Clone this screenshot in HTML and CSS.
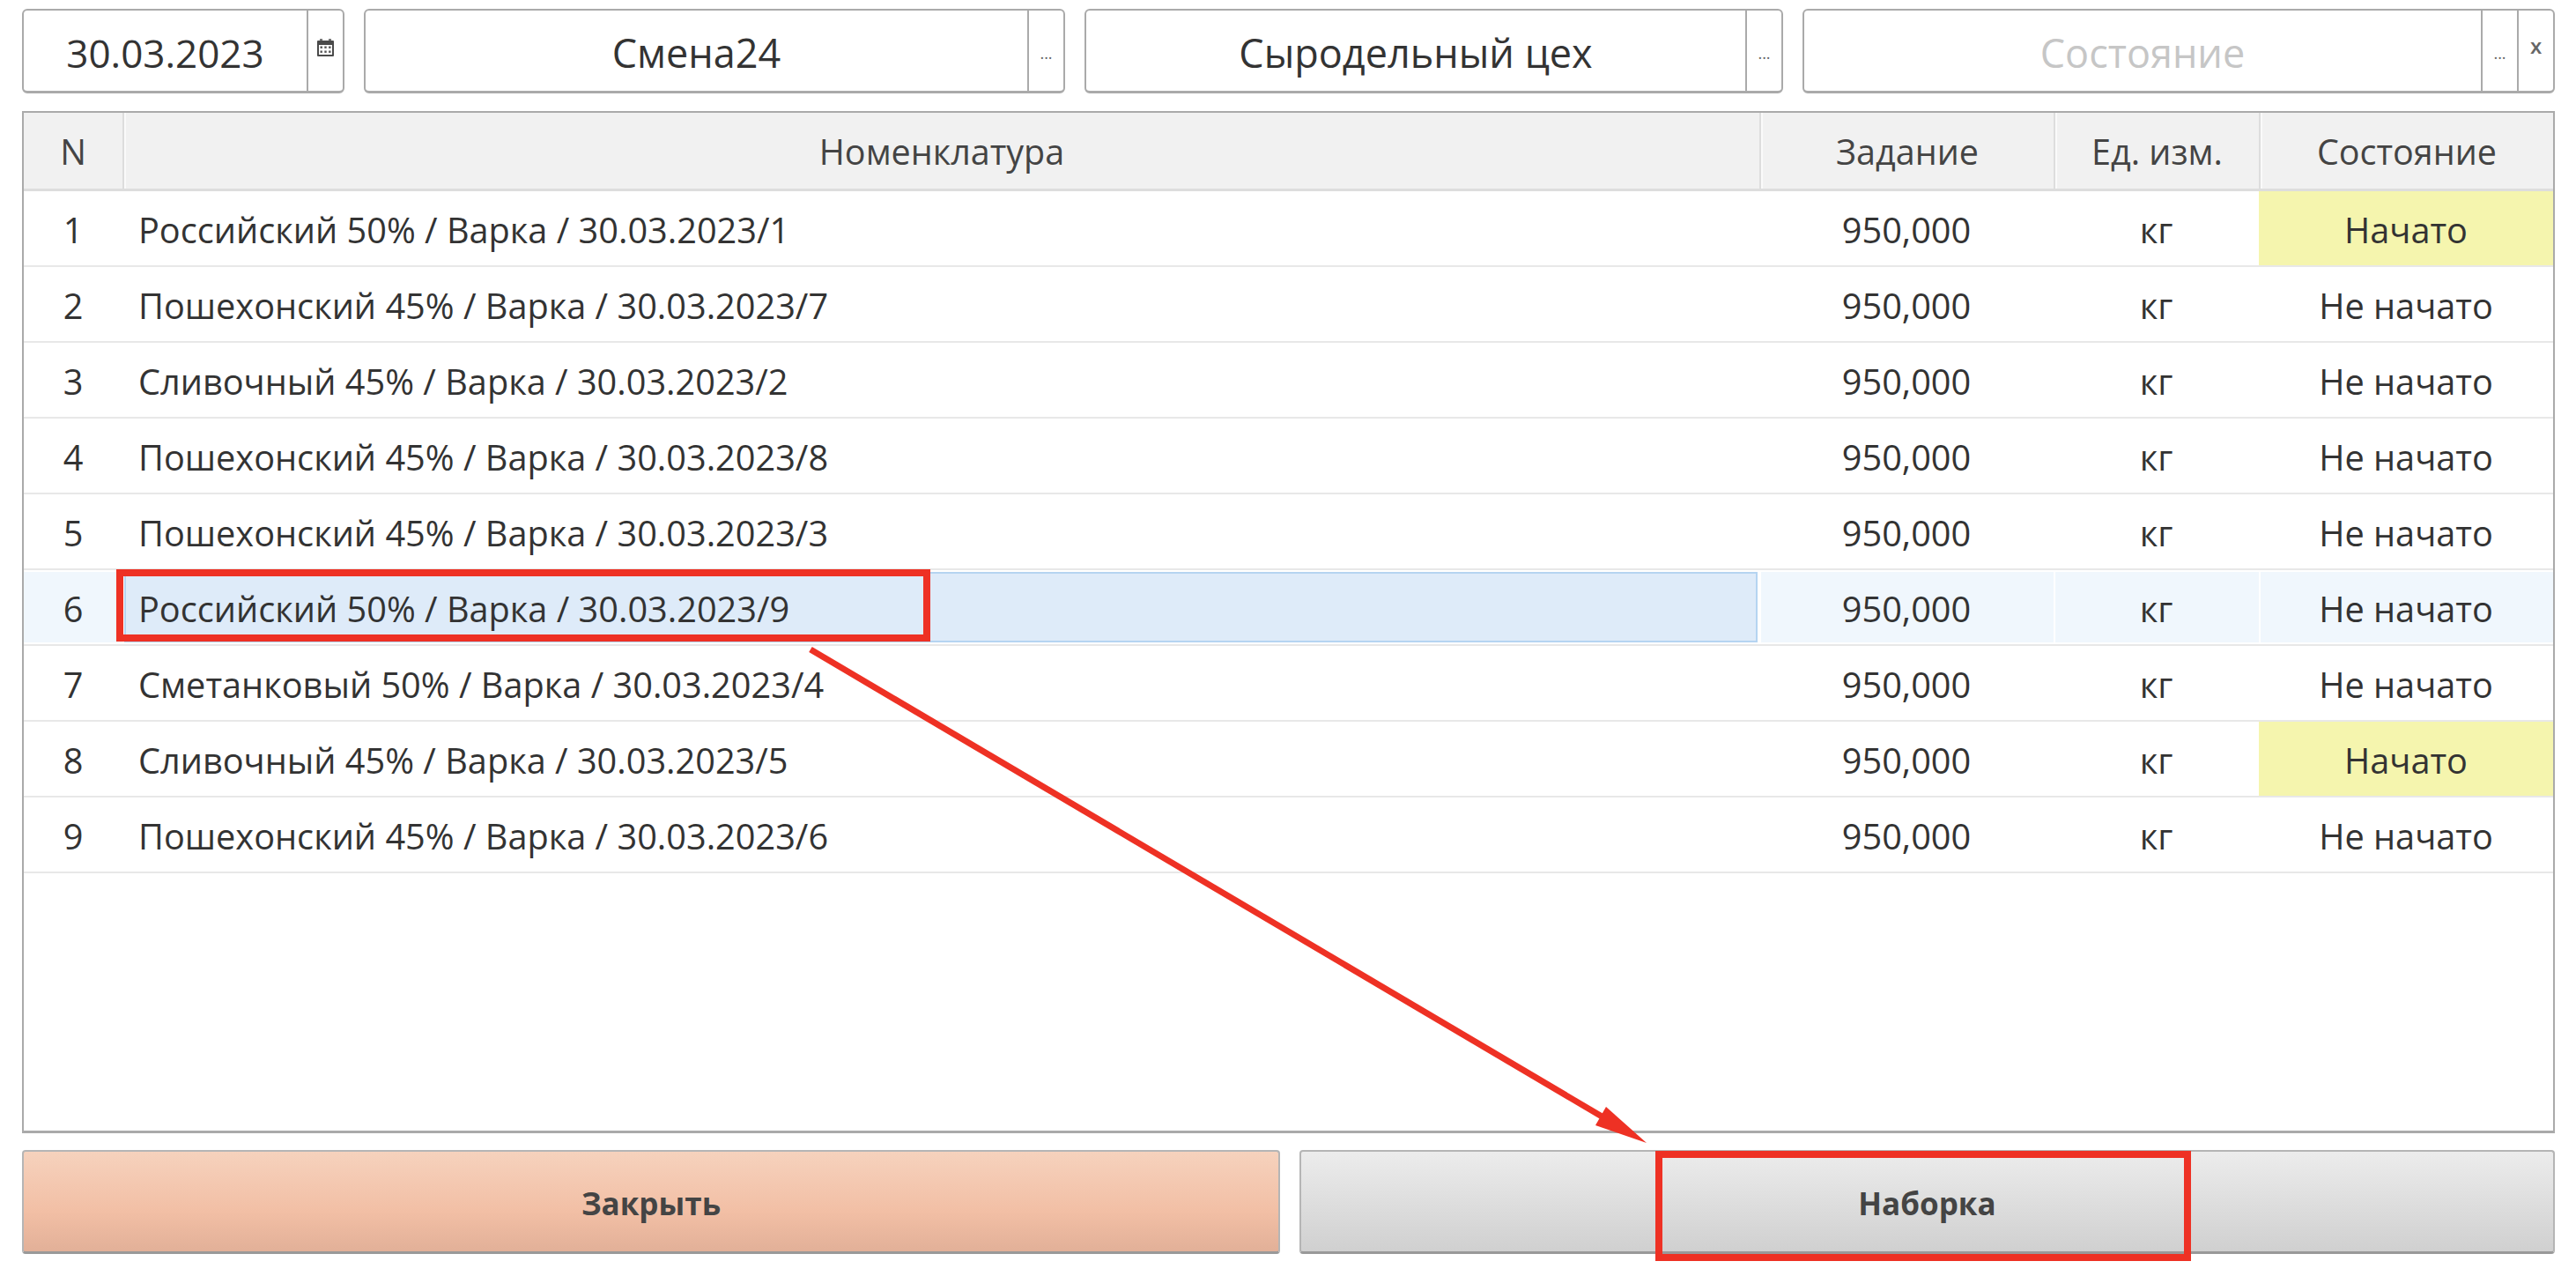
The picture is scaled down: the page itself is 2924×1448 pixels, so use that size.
FILE: index.html
```html
<!DOCTYPE html>
<html lang="ru">
<head>
    <meta charset="UTF-8">
    <title>Наборка</title>
    <link rel="stylesheet" href="styles.css">
</head>
<body>
    <div class="filters">
        <div class="field">
            <div class="field-value date-value">30.03.2023</div>
            <div class="field-btn date-btn">
                <svg class="cal-icon" viewBox="0 0 19 20">
                    <rect x="3" y="0" width="3" height="4" fill="#777"/>
                    <rect x="13" y="0" width="3" height="4" fill="#777"/>
                    <rect x="0" y="2" width="19" height="18" rx="1" fill="#4a4a4a"/>
                    <rect x="2" y="7" width="15" height="11" fill="#fff"/>
                    <g fill="#555">
                        <rect x="3.5" y="8.5" width="2.4" height="2.4"/>
                        <rect x="8.3" y="8.5" width="2.4" height="2.4"/>
                        <rect x="13.1" y="8.5" width="2.4" height="2.4"/>
                        <rect x="3.5" y="13.5" width="2.4" height="2.4"/>
                        <rect x="8.3" y="13.5" width="2.4" height="2.4"/>
                        <rect x="13.1" y="13.5" width="2.4" height="2.4"/>
                    </g>
                </svg>
            </div>
        </div>
        <div class="field">
            <div class="field-value">Смена24</div>
            <div class="field-btn dots">...</div>
        </div>
        <div class="field">
            <div class="field-value">Сыродельный цех</div>
            <div class="field-btn dots">...</div>
        </div>
        <div class="field">
            <div class="field-value placeholder">Состояние</div>
            <div class="field-btn dots">...</div>
            <div class="field-btn clear">x</div>
        </div>
    </div>

    <div class="grid-box">
        <table class="grid">
            <colgroup>
                <col class="col-n">
                <col>
                <col class="col-task">
                <col class="col-unit">
                <col class="col-state">
            </colgroup>
            <thead>
                <tr>
                    <th>N</th>
                    <th>Номенклатура</th>
                    <th>Задание</th>
                    <th>Ед. изм.</th>
                    <th>Состояние</th>
                </tr>
            </thead>
            <tbody>
                <tr>
                    <td>1</td>
                    <td class="name">Российский 50% / Варка / 30.03.2023/1</td>
                    <td>950,000</td>
                    <td>кг</td>
                    <td class="started">Начато</td>
                </tr>
                <tr>
                    <td>2</td>
                    <td class="name">Пошехонский 45% / Варка / 30.03.2023/7</td>
                    <td>950,000</td>
                    <td>кг</td>
                    <td>Не начато</td>
                </tr>
                <tr>
                    <td>3</td>
                    <td class="name">Сливочный 45% / Варка / 30.03.2023/2</td>
                    <td>950,000</td>
                    <td>кг</td>
                    <td>Не начато</td>
                </tr>
                <tr>
                    <td>4</td>
                    <td class="name">Пошехонский 45% / Варка / 30.03.2023/8</td>
                    <td>950,000</td>
                    <td>кг</td>
                    <td>Не начато</td>
                </tr>
                <tr>
                    <td>5</td>
                    <td class="name">Пошехонский 45% / Варка / 30.03.2023/3</td>
                    <td>950,000</td>
                    <td>кг</td>
                    <td>Не начато</td>
                </tr>
                <tr class="selected">
                    <td>6</td>
                    <td class="name">Российский 50% / Варка / 30.03.2023/9</td>
                    <td>950,000</td>
                    <td>кг</td>
                    <td>Не начато</td>
                </tr>
                <tr>
                    <td>7</td>
                    <td class="name">Сметанковый 50% / Варка / 30.03.2023/4</td>
                    <td>950,000</td>
                    <td>кг</td>
                    <td>Не начато</td>
                </tr>
                <tr>
                    <td>8</td>
                    <td class="name">Сливочный 45% / Варка / 30.03.2023/5</td>
                    <td>950,000</td>
                    <td>кг</td>
                    <td class="started">Начато</td>
                </tr>
                <tr>
                    <td>9</td>
                    <td class="name">Пошехонский 45% / Варка / 30.03.2023/6</td>
                    <td>950,000</td>
                    <td>кг</td>
                    <td>Не начато</td>
                </tr>
            </tbody>
        </table>
    </div>

    <div class="actions">
        <button type="button" class="btn btn-close">Закрыть</button>
        <button type="button" class="btn btn-pick">Наборка</button>
    </div>

    <!-- red marks drawn over the screenshot -->
    <svg class="marks" viewBox="0 0 2924 1448">
        <rect x="136" y="650" width="916" height="74" fill="none" stroke="#ee3124" stroke-width="8"/>
        <rect x="1883" y="1310" width="600" height="117" fill="none" stroke="#ee3124" stroke-width="8"/>
        <line x1="920" y1="737" x2="1820" y2="1268" stroke="#ee3124" stroke-width="7"/>
        <polygon points="1869,1297 1811,1277 1823,1256" fill="#ee3124"/>
    </svg>
</body>
</html>
```

FILE: styles.css
```css
html, body {
    margin: 0;
    padding: 0;
}

body {
    width: 2924px;
    height: 1448px;
    box-sizing: border-box;
    padding: 10px 24px 25px 25px;
    display: flex;
    flex-direction: column;
    position: relative;
    background: #fff;
    color: #333;
    font-family: "Open Sans", "Noto Sans", sans-serif;
    font-size: 39.7px;
    overflow: hidden;
}

/*****
filters
******/
.filters {
    display: grid;
    grid-template-columns: 366px 796px 793px 1fr;
    gap: 22px;
    height: 96px;
}

.field {
    display: flex;
    border: 2px solid #aaa;
    border-bottom-width: 3px;
    border-radius: 6px;
}

.field-value {
    flex: 1;
    display: flex;
    align-items: center;
    justify-content: center;
    padding-top: 4px;
    font-size: 45px;
}

.date-value {
    font-size: 44px;
}

.placeholder {
    color: #c6c6c6;
}

.field-btn {
    width: 39px;
    border-left: 2px solid #aaa;
    display: flex;
    align-items: center;
    justify-content: center;
    color: #666;
    font-size: 18px;
}

.cal-icon {
    width: 19px;
    height: 20px;
    margin-bottom: 8px;
}

.dots {
    padding-top: 4px;
}

.clear {
    padding-bottom: 12px;
    font-size: 24px;
    font-weight: 600;
}

/*****
grid
******/
.grid-box {
    flex: 1;
    margin-top: 20px;
    border: 2px solid #aaa;
    border-bottom-width: 3px;
}

.grid {
    width: 100%;
    table-layout: fixed;
    border-collapse: separate;
    border-spacing: 0;
}

.col-n {
    width: 112px;
}

.col-task {
    width: 334px;
}

.col-unit {
    width: 233px;
}

.col-state {
    width: 334px;
}

.grid th {
    height: 84px;
    padding: 2px 0 0;
    background: #f1f1f1;
    border-bottom: 3px solid #ddd;
    border-left: 2px solid #ddd;
    box-shadow: inset 2px 0 0 #fafafa;
    font-size: 39.5px;
    font-weight: 400;
    color: #444;
    text-align: center;
}

.grid th:first-child {
    border-left: none;
    box-shadow: none;
}

.grid td {
    height: 80px;
    padding: 4px 0 0;
    border-bottom: 2px solid #e8e8e8;
    text-align: center;
}

.grid td.name {
    padding-left: 18px;
    text-align: left;
}

.grid td.started {
    background: #f5f5ae;
}

.selected td {
    background: #f0f7fd;
    box-shadow: inset 0 2px 0 #fff, inset 0 -2px 0 #fff, inset 2px 0 0 #fff;
}

.selected td:first-child {
    box-shadow: inset 0 2px 0 #fff, inset 0 -2px 0 #fff;
}

.selected td.name {
    background: #deebf9;
    box-shadow: inset 0 0 0 2px #fff, inset 0 0 0 4px #b5d4f1;
}

/*****
buttons
******/
.actions {
    display: grid;
    grid-template-columns: 1428px 1fr;
    gap: 22px;
    height: 118px;
    margin-top: 19px;
}

.btn {
    border: 2px solid #b5b5b5;
    border-bottom: 3px solid #999;
    border-radius: 4px;
    padding-top: 4px;
    font-family: inherit;
    font-size: 35px;
    font-weight: 700;
    color: #444;
}

.btn-close {
    background: linear-gradient(#f6d2bd, #f2bfa5 60%, #e2b098);
}

.btn-pick {
    background: linear-gradient(#ececec, #d0d0d0);
}

.marks {
    position: absolute;
    left: 0;
    top: 0;
    width: 2924px;
    height: 1448px;
    pointer-events: none;
}
```
